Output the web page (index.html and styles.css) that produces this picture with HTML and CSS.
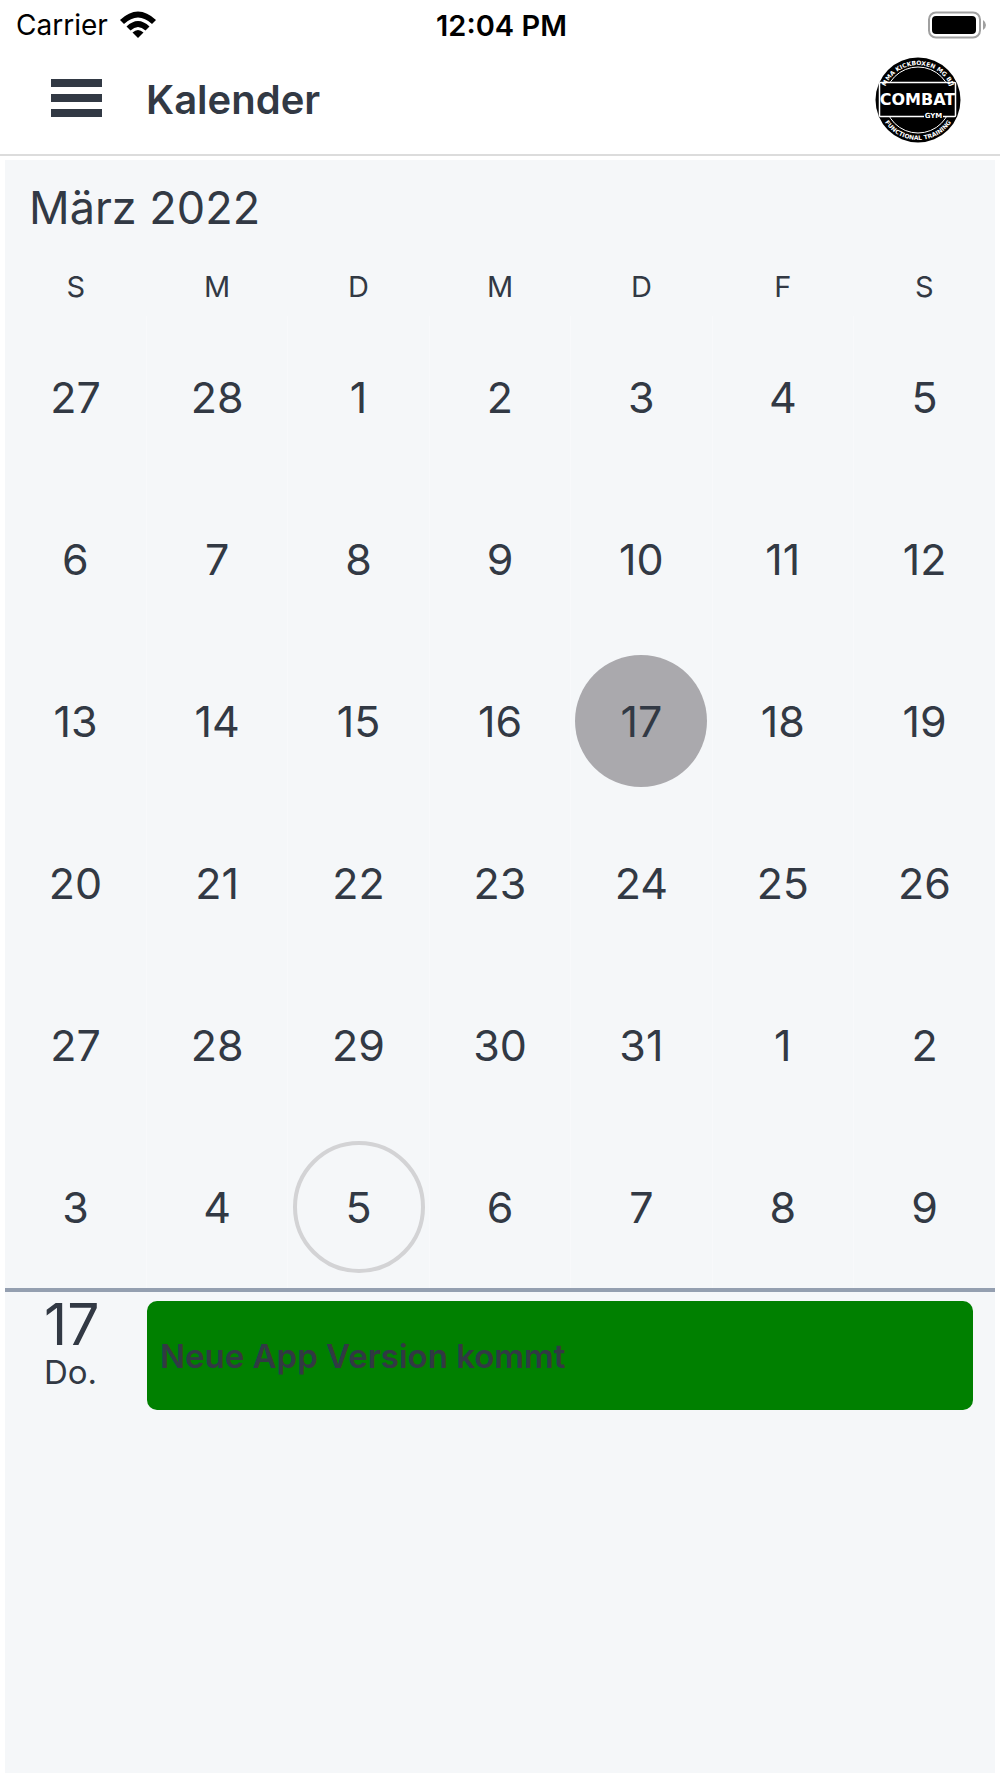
FILE: index.html
```html
<!DOCTYPE html>
<html lang="de">
<head>
  <meta charset="UTF-8" />
  <meta name="viewport" content="width=device-width, initial-scale=1.0" />
  <title>Kalender</title>
  <link rel="stylesheet" href="styles.css">
</head>
<body>
  <div class="status-bar">
    <div class="carrier">
      <span>Carrier</span>
      <svg class="wifi" width="38" height="28" viewBox="0 0 38 28">
        <path d="M1 9 Q19 -8 37 9 L33 13 Q19 0 5 13 Z" />
        <path d="M7.500 15.500 Q19 4.500 30.500 15.500 L26.500 19.500 Q19 12.500 11.500 19.500 Z" />
        <path d="M13.500 21.500 Q19 16.500 24.500 21.500 L19 27 Z" />
      </svg>
    </div>
    <div class="clock">12:04 PM</div>
    <svg class="battery" width="60" height="28" viewBox="0 0 60 28">
      <rect x="2" y="1.500" width="51" height="25" rx="7" fill="#fff" stroke="#a0a0a0" stroke-width="2" />
      <rect x="5" y="5" width="44" height="18" rx="4" />
      <path d="M56 9 Q59 11 59 14 Q59 17 56 19 Z" fill="#a0a0a0" />
    </svg>
  </div>

  <header class="header">
    <button class="menu" aria-label="Menü"><span></span><span></span><span></span></button>
    <h1>Kalender</h1>
    <svg class="logo" width="86" height="86" viewBox="0 0 86 86">
      <defs>
        <path id="arcTop" d="M11 59 A35.500 35.500 0 1 1 75 59" />
        <path id="arcBottom" d="M3 43 A40 40 0 0 0 83 43" />
      </defs>
      <circle cx="43" cy="43" r="42.500" />
      <circle cx="43" cy="43" r="33" fill="none" stroke="#fff" />
      <rect x="4.500" y="25.500" width="76" height="34" rx="1" stroke="#fff" stroke-width="1.500" />
      <text class="logo-name" x="42.500" y="48">COMBAT</text>
      <rect x="49" y="55" width="19" height="7" />
      <text class="logo-gym" x="58.500" y="61">GYM</text>
      <text class="logo-ring"><textPath href="#arcTop" startOffset="50%">MMA KICKBOXEN MG BJJ</textPath></text>
      <text class="logo-ring"><textPath href="#arcBottom" startOffset="50%">FUNCTIONAL TRAINING</textPath></text>
    </svg>
  </header>

  <main class="calendar">
    <h2>März 2022</h2>
    <table class="month">
      <thead>
        <tr><th>S</th><th>M</th><th>D</th><th>M</th><th>D</th><th>F</th><th>S</th></tr>
      </thead>
      <tbody>
        <tr>
          <td><button>27</button></td><td><button>28</button></td><td><button>1</button></td><td><button>2</button></td><td><button>3</button></td><td><button>4</button></td><td><button>5</button></td>
        </tr>
        <tr>
          <td><button>6</button></td><td><button>7</button></td><td><button>8</button></td><td><button>9</button></td><td><button>10</button></td><td><button>11</button></td><td><button>12</button></td>
        </tr>
        <tr>
          <td><button>13</button></td><td><button>14</button></td><td><button>15</button></td><td><button>16</button></td><td><button class="selected">17</button></td><td><button>18</button></td><td><button>19</button></td>
        </tr>
        <tr>
          <td><button>20</button></td><td><button>21</button></td><td><button>22</button></td><td><button>23</button></td><td><button>24</button></td><td><button>25</button></td><td><button>26</button></td>
        </tr>
        <tr>
          <td><button>27</button></td><td><button>28</button></td><td><button>29</button></td><td><button>30</button></td><td><button>31</button></td><td><button>1</button></td><td><button>2</button></td>
        </tr>
        <tr>
          <td><button>3</button></td><td><button>4</button></td><td><button class="today">5</button></td><td><button>6</button></td><td><button>7</button></td><td><button>8</button></td><td><button>9</button></td>
        </tr>
      </tbody>
    </table>

    <section class="agenda">
      <div class="agenda-day">
        <div class="day-number">17</div>
        <div class="day-name">Do.</div>
      </div>
      <button class="event">Neue App Version kommt</button>
    </section>
  </main>
</body>
</html>
```
FILE: styles.css
```css
* { box-sizing: border-box; }
body {
  margin: 0;
  min-height: 100vh;
  display: flex;
  flex-direction: column;
  background: #fff;
  color: #323944;
  font-family: Inter, "Liberation Sans", sans-serif;
}
button { font: inherit; color: inherit; border: none; background: none; padding: 0; cursor: pointer; }

/* status bar */
.status-bar {
  display: grid;
  grid-template-columns: 1fr auto 1fr;
  align-items: center;
  height: 50px;
  padding: 0 13px 0 16px;
  color: #000;
  font-size: 28px;
}
.carrier { display: flex; align-items: center; gap: 11px; }
.clock { font-size: 29px; font-weight: 600; }
.battery { justify-self: end; }

/* header */
.header {
  display: flex;
  align-items: center;
  height: 106px;
  padding: 0 39px 5px 51px;
  border-bottom: 2px solid #dcdcdc;
}
.menu { display: flex; flex-direction: column; gap: 7px; width: 51px; padding-bottom: 4px; }
.menu span { height: 8px; background: #323944; }
.header h1 { flex: 1; margin: 0 0 0 44px; font-size: 40px; font-weight: 600; }
.logo-name, .logo-gym, .logo-ring { fill: #fff; font-family: "DejaVu Sans", sans-serif; font-weight: bold; text-anchor: middle; }
.logo-name { font-size: 16px; }
.logo-gym { font-size: 7px; }
.logo-ring { font-size: 6px; }

/* month */
.calendar {
  flex: 1;
  margin: 4px 5px 5px;
  background: #f5f7f9;
}
.calendar h2 { margin: 0; padding: 20px 24px 0; font-size: 45px; line-height: 56px; font-weight: 400; }
.month { width: 100%; table-layout: fixed; border-collapse: collapse; }
.month th { height: 80px; padding: 20px 0 0; font-size: 29px; font-weight: 400; vertical-align: middle; }
.month td { height: 162px; padding: 0; text-align: center; vertical-align: middle; }
.month td + td { border-left: 1px solid #f8f9fb; }
.month td button { width: 132px; height: 132px; border-radius: 50%; font-size: 43px; }
.month .selected { background: #aaa9ad; }
.month .today { border: 4px solid #d3d3d5; }

/* agenda */
.agenda { display: flex; align-items: flex-start; padding: 0 22px 0 0; border-top: 4px solid #949fb0; }
.agenda-day { width: 142px; padding-left: 39px; }
.day-number { font-size: 57px; line-height: 66px; }
.day-name { font-size: 33px; line-height: 28px; }
.event {
  flex: 1;
  height: 109px;
  margin-top: 9px;
  padding: 0 13px;
  border-radius: 10px;
  background: green;
  font-size: 33px;
  font-weight: 600;
  text-align: left;
}
```
